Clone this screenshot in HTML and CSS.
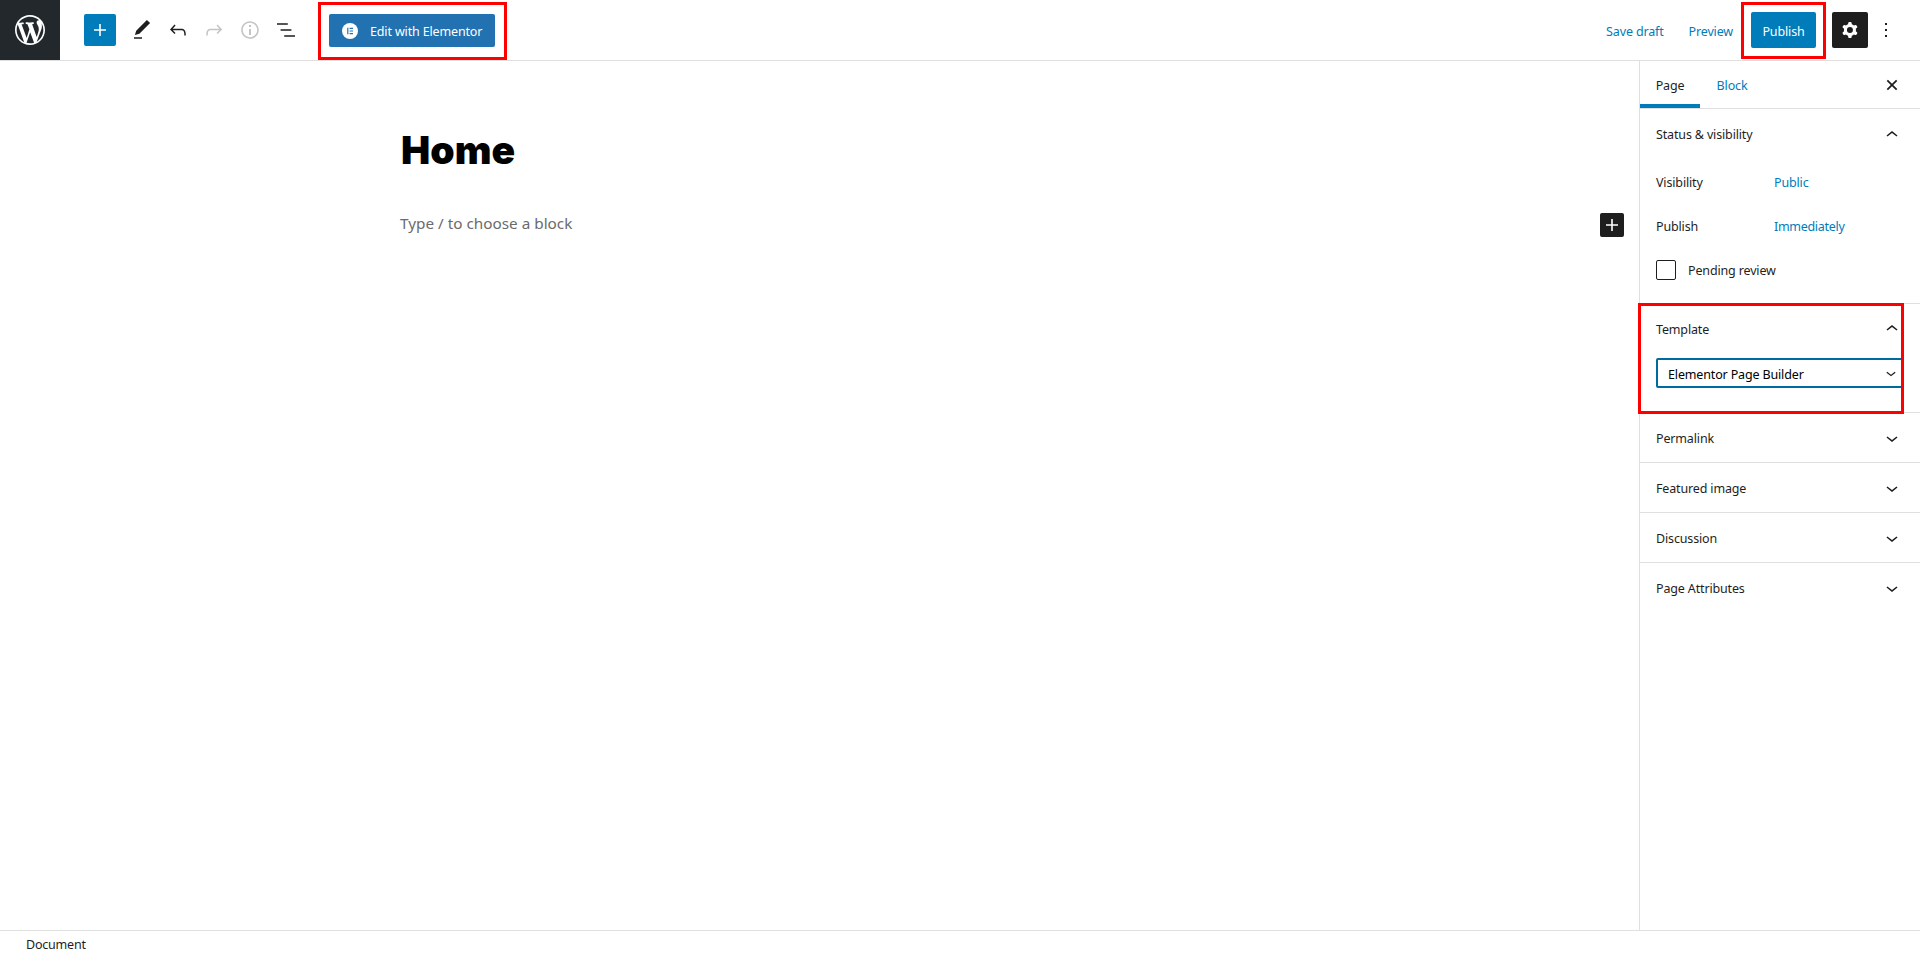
FILE: index.html
```html
<!DOCTYPE html>
<html lang="en">
<head>
<meta charset="utf-8">
<title>Edit Page</title>
<link rel="stylesheet" href="styles.css">
</head>
<body>
<div class="app">
  <header class="topbar">
    <a class="wp-logo"><svg width="30" height="30" viewBox="0 0 20 20"><path fill="#fff" d="M20 10c0-5.51-4.49-10-10-10C4.48 0 0 4.49 0 10c0 5.52 4.48 10 10 10 5.51 0 10-4.48 10-10zM7.78 15.37L4.37 6.22c.55-.02 1.17-.08 1.17-.08.5-.06.44-1.13-.06-1.11 0 0-1.45.11-2.37.11-.18 0-.37 0-.58-.01C4.12 2.69 6.87 1.11 10 1.11c2.33 0 4.45.87 6.05 2.34-.68-.11-1.65.39-1.65 1.58 0 .74.45 1.36.9 2.1.35.61.55 1.36.55 2.46 0 1.49-1.4 5-1.4 5l-3.03-8.37c.54-.02.82-.17.82-.17.5-.05.44-1.25-.06-1.22 0 0-1.44.12-2.38.12-.87 0-2.33-.12-2.33-.12-.5-.03-.56 1.2-.06 1.22l.92.08 1.26 3.41zM17.41 10c.24-.64.74-1.87.43-4.25.7 1.29 1.05 2.71 1.05 4.25 0 3.29-1.73 6.24-4.4 7.78.97-2.59 1.94-5.2 2.92-7.78zM6.1 18.09C3.12 16.65 1.11 13.53 1.11 10c0-1.3.23-2.48.72-3.59C3.25 10.3 4.67 14.2 6.1 18.09zm4.03-6.63l2.58 6.98c-.86.29-1.76.45-2.71.45-.79 0-1.57-.11-2.29-.33.81-2.38 1.62-4.74 2.42-7.1z"/></svg></a>
    <div class="tools">
      <button class="inserter"><svg class="ico" viewBox="0 0 24 24"><path fill="#fff" d="M18 11.2h-5.2V6h-1.6v5.2H6v1.6h5.2V18h1.6v-5.2H18z"/></svg></button>
      <span class="tool"><svg class="ico" viewBox="0 0 24 24"><path fill="#1e1e1e" d="M20.1 5.1L16.9 2 6.2 12.7l-1.3 4.4 4.5-1.3L20.1 5.1zM4 20.8h8v-1.5H4v1.5z"/></svg></span>
      <span class="tool"><svg class="ico" viewBox="0 0 24 24"><path fill="#1e1e1e" d="M18.3 11.7c-.6-.6-1.4-.9-2.3-.9H6.7l2.9-3.3-1.1-1-4.5 5L8.5 16l1-1-2.7-2.7H16c.5 0 .9.2 1.3.5 1 1 1 3.4 1 4.5v.3h1.5v-.2c0-1.5 0-4.3-1.5-5.7z"/></svg></span>
      <span class="tool"><svg class="ico" viewBox="0 0 24 24"><path fill="#c4c4c4" d="M15.6 6.5l-1.1 1 2.9 3.3H8c-.9 0-1.7.3-2.3.9-1.4 1.5-1.4 4.2-1.4 5.6v.2h1.5v-.3c0-1.1 0-3.5 1-4.5.3-.3.7-.5 1.3-.5h9.2L14.5 15l1.1 1.1 4.6-4.6-4.6-5z"/></svg></span>
      <span class="tool"><svg class="ico" viewBox="0 0 24 24"><path fill="#c4c4c4" d="M12 3.2c-4.8 0-8.8 3.9-8.8 8.8 0 4.8 3.9 8.8 8.8 8.8 4.8 0 8.8-3.9 8.8-8.8 0-4.8-4-8.8-8.8-8.8zm0 16c-4 0-7.2-3.3-7.2-7.2C4.8 8 8 4.8 12 4.8s7.2 3.3 7.2 7.2c0 4-3.2 7.2-7.2 7.2zM11 17h2v-6h-2v6zm0-8h2V7h-2v2z"/></svg></span>
      <span class="tool"><svg class="ico" viewBox="0 0 24 24"><path fill="#1e1e1e" d="M13.8 5.2H3v1.5h10.8V5.2zm-3.6 12v1.5H21v-1.5H10.2zm7.2-6H6.6v1.5h10.8v-1.5z"/></svg></span>
      <div class="elementor-wrap">
        <button class="elementor-btn"><svg class="e-ico" viewBox="0 0 16 16"><circle cx="8" cy="8" r="8" fill="#fff"/><path fill="#2271b1" d="M5.2 4.8h1.2v6.4H5.2zM7.6 4.8h3.4V6H7.6zM7.6 7.4h3.4v1.2H7.6zM7.6 10h3.4v1.2H7.6z"/></svg><span class="btn-text">Edit with Elementor</span></button>
        <span class="mark mark-elementor"></span>
      </div>
    </div>
    <div class="actions">
      <a class="link save">Save draft</a>
      <a class="link preview">Preview</a>
      <div class="publish-wrap">
        <button class="publish">Publish</button>
        <span class="mark mark-publish"></span>
      </div>
      <button class="gear"><svg class="ico" viewBox="0 0 24 24"><path fill="#fff" fill-rule="evenodd" clip-rule="evenodd" d="M10.289 4.836A1 1 0 0111.275 4h1.306a1 1 0 01.987.836l.244 1.466c.787.26 1.503.679 2.108 1.218l1.393-.522a1 1 0 011.216.437l.653 1.13a1 1 0 01-.23 1.273l-1.148.944a6.025 6.025 0 010 2.435l1.149.946a1 1 0 01.23 1.272l-.653 1.13a1 1 0 01-1.216.437l-1.394-.522c-.605.54-1.32.958-2.108 1.218l-.244 1.466a1 1 0 01-.987.836h-1.306a1 1 0 01-.986-.836l-.244-1.466a5.995 5.995 0 01-2.108-1.218l-1.394.522a1 1 0 01-1.217-.436l-.653-1.131a1 1 0 01.23-1.272l1.149-.946a6.026 6.026 0 010-2.435l-1.148-.944a1 1 0 01-.23-1.272l.653-1.131a1 1 0 011.217-.437l1.393.522a5.994 5.994 0 012.108-1.218l.244-1.466zM14.929 12a3 3 0 11-6 0 3 3 0 016 0z"/></svg></button>
      <span class="more"><svg class="ico" viewBox="0 0 24 24"><path fill="#1e1e1e" d="M13 19h-2v-2h2v2zm0-6h-2v-2h2v2zm0-6h-2V5h2v2z"/></svg></span>
    </div>
  </header>

  <div class="main">
    <main class="editor">
      <h1 class="title">Home</h1>
      <div class="block-row">
        <p class="placeholder">Type / to choose a block</p>
        <button class="block-add"><svg class="ico" viewBox="0 0 24 24"><path fill="#fff" d="M18 11.2h-5.2V6h-1.6v5.2H6v1.6h5.2V18h1.6v-5.2H18z"/></svg></button>
      </div>
    </main>

    <aside class="sidebar">
      <div class="tabs">
        <span class="tab tab-active">Page</span>
        <span class="tab tab-link">Block</span>
        <svg class="close" viewBox="0 0 24 24"><path fill="none" stroke="#1e1e1e" stroke-width="2.6" d="M5 5l14 14M19 5L5 19"/></svg>
      </div>

      <section class="panel panel-status">
        <div class="panel-head"><span>Status &amp; visibility</span><svg class="ico" viewBox="0 0 24 24"><path fill="#1e1e1e" d="M6.5 12.4L12 8l5.5 4.4-.9 1.2L12 10l-4.5 3.6-1-1.2z"/></svg></div>
        <div class="row"><span class="row-label">Visibility</span><a class="link">Public</a></div>
        <div class="row"><span class="row-label">Publish</span><a class="link immediately">Immediately</a></div>
        <div class="row"><span class="checkbox"></span><span class="check-label">Pending review</span></div>
      </section>

      <section class="panel panel-template">
        <div class="panel-head"><span>Template</span><svg class="ico" viewBox="0 0 24 24"><path fill="#1e1e1e" d="M6.5 12.4L12 8l5.5 4.4-.9 1.2L12 10l-4.5 3.6-1-1.2z"/></svg></div>
        <div class="select"><span class="select-text">Elementor Page Builder</span><svg class="sel-ico" viewBox="0 0 24 24"><path fill="#1e1e1e" d="M17.5 11.6L12 16l-5.5-4.4.9-1.2L12 14l4.5-3.6 1 1.2z"/></svg></div>
        <span class="mark mark-template"></span>
      </section>

      <section class="panel closed"><div class="panel-head"><span class="head-text">Permalink</span><svg class="ico" viewBox="0 0 24 24"><path fill="#1e1e1e" d="M17.5 11.6L12 16l-5.5-4.4.9-1.2L12 14l4.5-3.6 1 1.2z"/></svg></div></section>
      <section class="panel closed"><div class="panel-head"><span class="head-text">Featured image</span><svg class="ico" viewBox="0 0 24 24"><path fill="#1e1e1e" d="M17.5 11.6L12 16l-5.5-4.4.9-1.2L12 14l4.5-3.6 1 1.2z"/></svg></div></section>
      <section class="panel closed"><div class="panel-head"><span class="head-text">Discussion</span><svg class="ico" viewBox="0 0 24 24"><path fill="#1e1e1e" d="M17.5 11.6L12 16l-5.5-4.4.9-1.2L12 14l4.5-3.6 1 1.2z"/></svg></div></section>
      <section class="panel closed last"><div class="panel-head"><span class="head-text">Page Attributes</span><svg class="ico" viewBox="0 0 24 24"><path fill="#1e1e1e" d="M17.5 11.6L12 16l-5.5-4.4.9-1.2L12 14l4.5-3.6 1 1.2z"/></svg></div></section>
    </aside>
  </div>

  <footer class="footer">Document</footer>
</div>
</body>
</html>
```

FILE: styles.css
```css
* { box-sizing: border-box; }
html, body { margin: 0; height: 100%; }
body { font-family: "Noto Sans", sans-serif; font-size: 12.5px; letter-spacing: -0.15px; color: #1e1e1e; background: #fff; overflow: hidden; }
button { font: inherit; letter-spacing: inherit; border: 0; padding: 0; cursor: pointer; }
.app { display: flex; flex-direction: column; height: 955px; }
.ico { width: 24px; height: 24px; display: block; }

.topbar { flex: 0 0 61px; display: flex; align-items: center; border-bottom: 1px solid #e0e0e0; }
.wp-logo { width: 60px; height: 60px; background: #23282d; display: flex; align-items: center; justify-content: center; align-self: flex-start; }
.tools { display: flex; align-items: center; margin-left: 24px; }
.inserter { width: 32px; height: 32px; background: #007cba; border-radius: 2px; display: flex; align-items: center; justify-content: center; margin-right: 8px; }
.tool { width: 36px; height: 36px; display: flex; align-items: center; justify-content: center; }
.elementor-wrap { position: relative; margin-left: 25px; margin-top: 1px; }
.elementor-btn { width: 166px; height: 33px; background: #2271b1; color: #fff; border-radius: 2px; display: flex; align-items: center; padding-left: 13px; }
.btn-text { padding-top: 1px; }
.e-ico { width: 16px; height: 16px; margin-right: 12px; }
.mark { position: absolute; border: 3px solid #f00; pointer-events: none; }
.mark-elementor { left: -11px; right: -12px; top: -12px; bottom: -13px; }
.mark-publish { left: -10px; right: -10px; top: -10px; bottom: -11px; }
.mark-template { left: -2px; top: -1px; width: 266px; height: 111px; }

.actions { margin-left: auto; display: flex; align-items: center; }
.link { color: #007cba; }
.save { margin-right: 25px; padding-top: 2px; }
.preview { margin-right: 18px; padding-top: 2px; }
.publish-wrap { position: relative; margin-right: 16px; }
.publish { display: block; width: 65px; height: 36px; padding-top: 3px; background: #007cba; color: #fff; border-radius: 2px; }
.gear { width: 36px; height: 36px; background: #1e1e1e; border-radius: 2px; display: flex; align-items: center; justify-content: center; }
.more { width: 36px; height: 36px; margin: 0 16px 0 0; display: flex; align-items: center; justify-content: center; }

.main { flex: 1; display: flex; min-height: 0; }
.editor { flex: 1; min-width: 0; padding: 0 15px 0 400px; }
.title { margin: 0; padding: 63px 0 0 1px; font-family: Inter, sans-serif; font-size: 39px; font-weight: 900; letter-spacing: 0; line-height: 52px; color: #000; }
.block-row { display: flex; align-items: center; justify-content: space-between; margin-top: 35px; }
.placeholder { margin: 0 0 4px; font-size: 15.3px; letter-spacing: 0; line-height: 24px; color: #6b6b6b; }
.block-add { width: 24px; height: 24px; background: #1e1e1e; border-radius: 2px; }

.sidebar { flex: 0 0 281px; border-left: 1px solid #e0e0e0; }
.tabs { height: 48px; display: flex; align-items: center; border-bottom: 1px solid #e0e0e0; position: relative; }
.tab { height: 47px; display: flex; align-items: center; justify-content: center; padding-top: 1px; }
.tab-active { width: 60px; box-shadow: inset 0 -4px 0 #007cba; }
.tab-link { width: 64px; color: #007cba; }
.close { width: 16px; height: 16px; margin-left: auto; margin-right: 20px; }

.panel { border-bottom: 1px solid #e0e0e0; padding: 0 16px; }
.panel.last { border-bottom: 0; }
.panel-head { height: 50px; display: flex; align-items: center; justify-content: space-between; }
.panel-status { height: 195px; }
.panel-status .panel-head { height: 51px; }
.row { height: 44px; display: flex; align-items: center; }
.row-label { width: 118px; }
.immediately { letter-spacing: -0.3px; }
.checkbox { width: 20px; height: 20px; border: 1px solid #1e1e1e; border-radius: 2px; margin-right: 12px; }
.panel-template { height: 109px; position: relative; }
.select { height: 30px; width: 248px; margin-top: 4px; border: 2px solid #006ba1; border-radius: 2px; display: flex; align-items: center; justify-content: space-between; padding: 0 1px 0 10px; color: #000; }
.select-text { padding-top: 3px; }
.sel-ico { width: 20px; height: 20px; }
.panel.closed { height: 50px; }
.panel.closed .panel-head { height: 49px; }
.head-text { padding-top: 2px; }

.footer { flex: 0 0 25px; border-top: 1px solid #e0e0e0; padding: 4px 0 0 26px; line-height: 20px; letter-spacing: -0.2px; }
```
